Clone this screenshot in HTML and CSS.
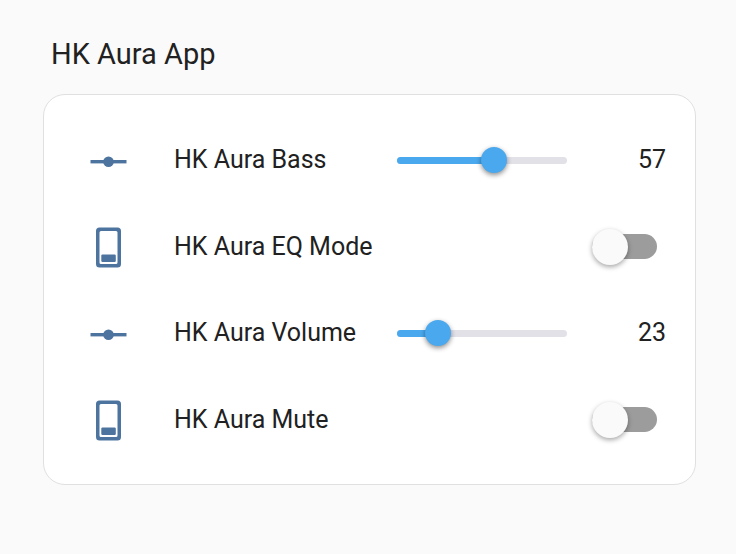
FILE: index.html
```html
<!DOCTYPE html>
<html lang="en">
<head>
<meta charset="utf-8">
<meta name="viewport" content="width=device-width, initial-scale=1">
<title>HK Aura App</title>
<link rel="stylesheet" href="styles.css">
</head>
<body>
<main class="view">
  <h1 class="title">HK Aura App</h1>
  <section class="card">
    <div class="row">
      <svg class="icon" viewBox="0 0 43 43" aria-hidden="true"><rect x="3.5" y="21" width="36" height="3.4"/><circle cx="21.5" cy="22.7" r="5.3"/></svg>
      <label class="name" for="bass">HK Aura Bass</label>
      <div class="slider">
        <div class="track"><div class="fill" style="width:57%"></div></div>
        <input class="range" id="bass" type="range" min="0" max="100" value="57">
      </div>
      <output class="value" for="bass">57</output>
    </div>
    <div class="row">
      <svg class="icon" viewBox="0 0 43 43" aria-hidden="true"><path fill-rule="evenodd" d="M12.5 2.5h18a3.5 3.5 0 0 1 3.5 3.5v33a3.5 3.5 0 0 1-3.5 3.5h-18a3.5 3.5 0 0 1-3.5-3.5v-33a3.5 3.5 0 0 1 3.5-3.5zm1.5 3.6a1.5 1.5 0 0 0-1.5 1.5v29.8a1.5 1.5 0 0 0 1.5 1.5h15a1.5 1.5 0 0 0 1.5-1.5V7.6a1.5 1.5 0 0 0-1.5-1.5z"/><rect x="14.3" y="29.5" width="14.5" height="7.5" rx="1.2"/></svg>
      <label class="name" for="eq">HK Aura EQ Mode</label>
      <input class="switch" id="eq" type="checkbox" role="switch">
    </div>
    <div class="row">
      <svg class="icon" viewBox="0 0 43 43" aria-hidden="true"><rect x="3.5" y="21" width="36" height="3.4"/><circle cx="21.5" cy="22.7" r="5.3"/></svg>
      <label class="name" for="volume">HK Aura Volume</label>
      <div class="slider">
        <div class="track"><div class="fill" style="width:24%"></div></div>
        <input class="range" id="volume" type="range" min="0" max="95" value="23">
      </div>
      <output class="value" for="volume">23</output>
    </div>
    <div class="row">
      <svg class="icon" viewBox="0 0 43 43" aria-hidden="true"><path fill-rule="evenodd" d="M12.5 2.5h18a3.5 3.5 0 0 1 3.5 3.5v33a3.5 3.5 0 0 1-3.5 3.5h-18a3.5 3.5 0 0 1-3.5-3.5v-33a3.5 3.5 0 0 1 3.5-3.5zm1.5 3.6a1.5 1.5 0 0 0-1.5 1.5v29.8a1.5 1.5 0 0 0 1.5 1.5h15a1.5 1.5 0 0 0 1.5-1.5V7.6a1.5 1.5 0 0 0-1.5-1.5z"/><rect x="14.3" y="29.5" width="14.5" height="7.5" rx="1.2"/></svg>
      <label class="name" for="mute">HK Aura Mute</label>
      <input class="switch" id="mute" type="checkbox" role="switch">
    </div>
  </section>
</main>
</body>
</html>
```
FILE: styles.css
```css
* {
  box-sizing: border-box;
}

body {
  margin: 0;
  background: #fafafa;
  color: #212121;
  font-family: Roboto, "Liberation Sans", sans-serif;
  font-size: 25px;
  line-height: 32px;
}

.view {
  padding: 34px 40px 40px 43px;
}

.title {
  margin: 0 0 20px;
  padding-left: 8px;
  font-size: 29px;
  font-weight: 400;
  line-height: 40px;
}

.card {
  display: grid;
  grid-auto-rows: 1fr;
  min-height: 391px;
  padding: 22px 29px 21px 43px;
  background: #fff;
  border: 1px solid #e0e0e0;
  border-radius: 22px;
}

.row {
  display: flex;
  align-items: center;
}

.icon {
  flex: none;
  width: 43px;
  height: 43px;
  margin-right: 44px;
  fill: #4d749f;
}

.name {
  flex: 1;
  white-space: nowrap;
}

.slider {
  position: relative;
  flex: none;
  width: 170px;
}

.track {
  height: 7px;
  overflow: hidden;
  background: #e3e1e8;
  border-radius: 4px;
}

.fill {
  height: 100%;
  background: #49a8ee;
}

/* The input is one thumb wider than the track, so the thumb centre can reach both ends. */
.range {
  position: absolute;
  top: -10px;
  left: -13px;
  width: 196px;
  height: 26px;
  margin: 0;
  background: transparent;
  appearance: none;
}

.range::-webkit-slider-thumb {
  width: 26px;
  height: 26px;
  background: #49a8ee;
  border: 0;
  border-radius: 50%;
  box-shadow: 0 2px 5px rgba(0, 0, 0, 0.45);
  appearance: none;
}

.value {
  flex: none;
  width: 99px;
  text-align: right;
}

.switch {
  display: flex;
  align-items: center;
  flex: none;
  width: 65px;
  height: 25px;
  margin: 0 9px 0 0;
  background: #9c9c9c;
  border-radius: 13px;
  appearance: none;
}

.switch::before {
  content: "";
  flex: none;
  width: 36px;
  height: 36px;
  background: #fafafa;
  border-radius: 50%;
  box-shadow: 0 2px 5px rgba(0, 0, 0, 0.35);
}

.switch:checked {
  justify-content: flex-end;
}
```
